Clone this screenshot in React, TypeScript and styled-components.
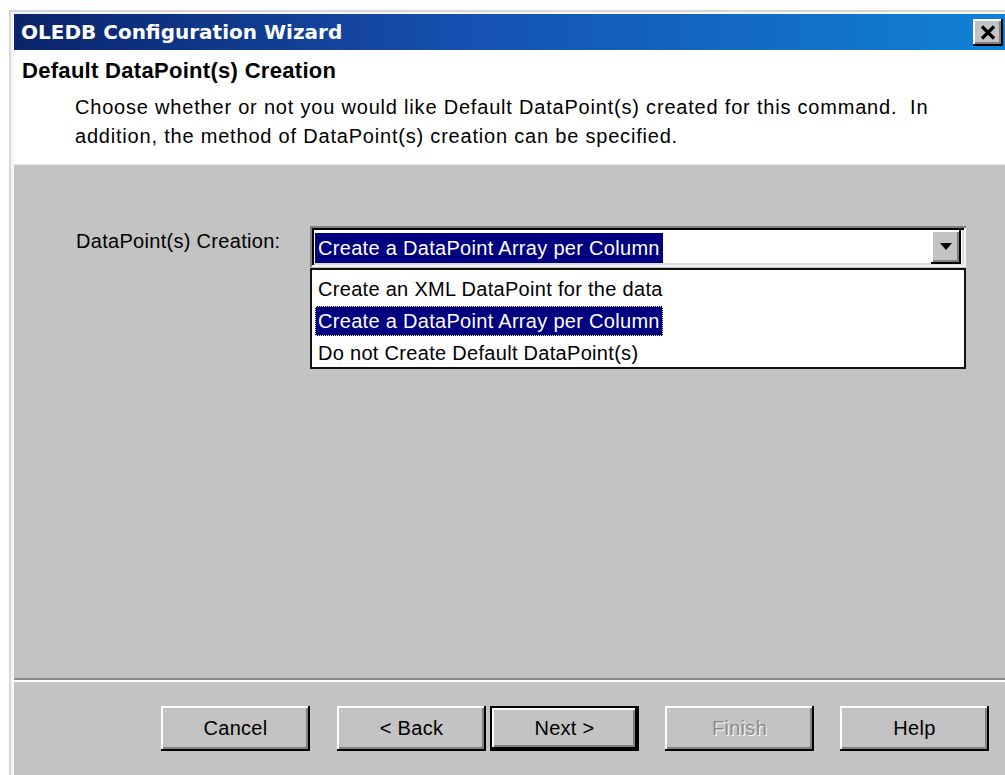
import React from 'react';
import styled, { createGlobalStyle } from 'styled-components';

const GlobalStyle = createGlobalStyle`
  html, body {
    margin: 0;
    padding: 0;
    background: #ffffff;
    overflow: hidden;
  }
  body {
    font-family: "Liberation Sans", Arial, sans-serif;
  }
`;

const raised = `
  box-shadow:
    inset -2px -2px #000000,
    inset 2px 2px #ffffff,
    inset -4px -4px #808080;
`;

const Page = styled.div`
  box-sizing: border-box;
  height: 775px;
  padding: 10px 0 0 9px;
`;

const Dialog = styled.div`
  box-sizing: border-box;
  width: 996px;
  height: 765px;
  border-top: 2px solid #d6d6d6;
  border-left: 2px solid #d6d6d6;
  padding: 2px 0 0 3px;
  background: #f6f6f6;
  display: flex;
  flex-direction: column;
`;

const TitleBar = styled.div`
  flex: none;
  height: 36px;
  display: flex;
  align-items: center;
  background: linear-gradient(to right, #0a246a 0%, #1650b0 45%, #0f82d6 100%);
`;

const TitleText = styled.span`
  padding-left: 7px;
  font-family: "DejaVu Sans", Verdana, sans-serif;
  font-weight: bold;
  font-size: 20px;
  color: #ffffff;
  white-space: nowrap;
`;

const CloseButton = styled.div`
  margin: 0 2px 0 auto;
  width: 30px;
  height: 27px;
  background: #c3c3c3;
  display: flex;
  align-items: center;
  justify-content: center;
  ${raised}
`;

const Header = styled.div`
  flex: none;
  box-sizing: border-box;
  height: 115px;
  background: #ffffff;
  border-bottom: 1px solid #e2e2e2;
  padding: 8px 0 0 8px;
`;

const Heading = styled.div`
  font-weight: bold;
  font-size: 22px;
  letter-spacing: 0.3px;
  line-height: 26px;
  color: #000000;
`;

const Description = styled.p`
  margin: 9px 0 0 53px;
  font-size: 20px;
  letter-spacing: 0.8px;
  line-height: 29px;
  color: #000000;
`;

const Content = styled.div`
  flex: 1;
  background: #c3c3c3;
  padding: 61px 0 0 62px;
`;

const FormRow = styled.div`
  display: flex;
  align-items: flex-start;
`;

const FieldLabel = styled.label`
  width: 234px;
  flex: none;
  font-size: 20px;
  letter-spacing: 0.3px;
  line-height: 30px;
  color: #000000;
`;

const ComboWrap = styled.div`
  width: 656px;
  display: flex;
  flex-direction: column;
`;

const ComboBox = styled.div`
  box-sizing: border-box;
  height: 41px;
  background: #ffffff;
  padding: 5px 5px 2px 5px;
  display: flex;
  align-items: center;
  box-shadow:
    inset 2px 2px #808080,
    inset -2px -2px #f2f2f2,
    inset 4px 4px #000000,
    inset -4px -4px #dcdcdc;
`;

const Highlight = styled.span<{ $focus?: boolean }>`
  display: inline-block;
  background: #000080;
  color: #ffffff;
  padding: 0 3px 0 3px;
  font-size: 20px;
  letter-spacing: 0.3px;
  line-height: 30px;
  white-space: nowrap;
  outline: ${({ $focus }) => ($focus ? '1px dotted #f0f080' : 'none')};
  outline-offset: -1px;
`;

const DropButton = styled.div`
  margin: -3px 0 0 auto;
  width: 30px;
  height: 34px;
  background: #c3c3c3;
  display: flex;
  align-items: center;
  justify-content: center;
  ${raised}
`;

const ListBox = styled.ul`
  box-sizing: border-box;
  margin: 1px 0 0 0;
  height: 101px;
  list-style: none;
  padding: 3px 0 0 3px;
  background: #ffffff;
  border: 2px solid #111111;
`;

const ListItem = styled.li`
  height: 32px;
  display: flex;
  align-items: center;
  font-size: 20px;
  letter-spacing: 0.3px;
  color: #000000;
  white-space: nowrap;
`;

const ItemText = styled.span`
  padding-left: 3px;
`;

const Footer = styled.div`
  flex: none;
  height: 97px;
  background: #c3c3c3;
  display: flex;
  flex-direction: column;
`;

const Separator = styled.div`
  border-top: 2px solid #8a8a8a;
  border-bottom: 2px solid #ffffff;
`;

const ButtonRow = styled.div`
  display: flex;
  justify-content: flex-end;
  padding: 24px 16px 0 0;
`;

const Button = styled.button<{ $gap?: number; $primary?: boolean }>`
  box-sizing: border-box;
  width: 149px;
  height: 45px;
  margin: 0 0 0 ${({ $gap }) => $gap ?? 0}px;
  padding: 0;
  background: #c3c3c3;
  border: ${({ $primary }) => ($primary ? '2px solid #000000' : 'none')};
  font-family: "Liberation Sans", Arial, sans-serif;
  font-size: 20px;
  letter-spacing: 0.3px;
  color: #000000;
  ${raised}

  &:disabled {
    color: #8a8a8a;
    text-shadow: 1px 1px #ffffff;
  }
`;

const options = [
  'Create an XML DataPoint for the data',
  'Create a DataPoint Array per Column',
  'Do not Create Default DataPoint(s)',
];

const selected = 1;

export default function App() {
  return (
    <Page>
      <GlobalStyle />
      <Dialog>
        <TitleBar>
          <TitleText>OLEDB Configuration Wizard</TitleText>
          <CloseButton>
            <svg width="16" height="15" viewBox="0 0 16 15">
              <path d="M2 1.5 L14 13.5 M14 1.5 L2 13.5" stroke="#000" strokeWidth="3.2" />
            </svg>
          </CloseButton>
        </TitleBar>

        <Header>
          <Heading>Default DataPoint(s) Creation</Heading>
          <Description>
            Choose whether or not you would like Default DataPoint(s) created for this command.&nbsp; In
            <br />
            addition, the method of DataPoint(s) creation can be specified.
          </Description>
        </Header>

        <Content>
          <FormRow>
            <FieldLabel>DataPoint(s) Creation:</FieldLabel>
            <ComboWrap>
              <ComboBox>
                <Highlight>{options[selected]}</Highlight>
                <DropButton>
                  <svg width="12" height="7" viewBox="0 0 12 7">
                    <polygon points="0,0 12,0 6,7" fill="#000" />
                  </svg>
                </DropButton>
              </ComboBox>
              <ListBox>
                {options.map((opt, i) => (
                  <ListItem key={opt}>
                    {i === selected ? <Highlight $focus>{opt}</Highlight> : <ItemText>{opt}</ItemText>}
                  </ListItem>
                ))}
              </ListBox>
            </ComboWrap>
          </FormRow>
        </Content>

        <Footer>
          <Separator />
          <ButtonRow>
            <Button>Cancel</Button>
            <Button $gap={27}>&lt; Back</Button>
            <Button $gap={4} $primary>Next &gt;</Button>
            <Button $gap={26} disabled>Finish</Button>
            <Button $gap={26}>Help</Button>
          </ButtonRow>
        </Footer>
      </Dialog>
    </Page>
  );
}
